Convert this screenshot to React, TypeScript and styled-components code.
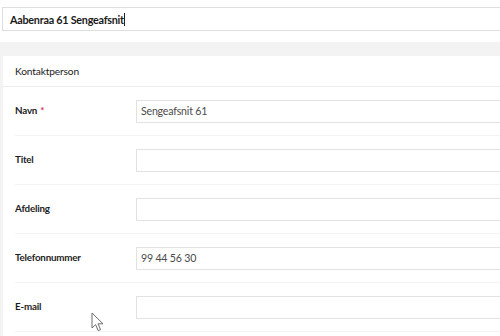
import React from "react";
import styled, { createGlobalStyle } from "styled-components";

const GlobalStyle = createGlobalStyle`
  html, body {
    margin: 0;
    padding: 0;
    background: #fff;
  }
  body {
    font-family: Lato, "Open Sans", "Liberation Sans", sans-serif;
    color: #222;
  }
`;

const fields = [
  { label: "Navn", required: true, value: "Sengeafsnit 61" },
  { label: "Titel", value: "" },
  { label: "Afdeling", value: "" },
  { label: "Telefonnummer", value: "99 44 56 30" },
  { label: "E-mail", value: "" },
];

const App = (): JSX.Element => {
  return (
    <Page>
      <GlobalStyle />
      <TitleBar>
        <TitleInput>
          Aabenraa 61 Sengeafsnit
          <Caret />
        </TitleInput>
      </TitleBar>
      <Body>
        <Card>
          <CardHeader>Kontaktperson</CardHeader>
          {fields.map((f) => (
            <Row key={f.label}>
              <Label>
                {f.label}
                {f.required && <Req>*</Req>}
              </Label>
              <Field>{f.value}</Field>
            </Row>
          ))}
        </Card>
      </Body>
      <Pointer width="14" height="21" viewBox="0 0 14 21">
        <path
          d="M1 1 L1 16 L4.6 12.6 L7.2 18.6 L9.6 17.6 L7 11.8 L12 11.8 Z"
          fill="#fff"
          stroke="#6d6d6d"
          strokeWidth="1"
          strokeLinejoin="round"
        />
      </Pointer>
    </Page>
  );
};

export default App;

const Page = styled.div`
  position: relative;
  width: 500px;
  height: 336px;
  overflow: hidden;
  background: #fff;
`;

const TitleBar = styled.div`
  padding: 7px 0 11px 2px;
`;

const TitleInput = styled.div`
  position: relative;
  width: 640px;
  height: 22px;
  border: 1px solid #dedede;
  padding-left: 7px;
  display: flex;
  align-items: center;
  font-size: 10.8px;
  letter-spacing: -0.25px;
  font-weight: 700;
  color: #1a1a1a;
`;

const Caret = styled.span`
  display: inline-block;
  width: 1px;
  height: 13px;
  margin-left: 0;
  background: #222;
`;

const Body = styled.div`
  background: #f4f3f3;
  padding: 14px 0 0 3px;
  height: 300px;
`;

const Card = styled.div`
  width: 700px;
  background: #fff;
  height: 100%;
`;

const CardHeader = styled.div`
  height: 30px;
  padding-left: 12px;
  display: flex;
  align-items: center;
  border-bottom: 1px solid #ececec;
  font-size: 10.2px;
  letter-spacing: -0.15px;
  color: #222;
`;

const Row = styled.div`
  margin-left: 12px;
  height: 48px;
  display: flex;
  align-items: center;
  border-bottom: 1px solid #f3f3f3;
`;

const Label = styled.div`
  width: 121px;
  margin-top: -3px;
  font-size: 9.8px;
  letter-spacing: -0.2px;
  font-weight: 700;
  color: #1e1e1e;
`;

const Req = styled.span`
  color: #d6336c;
  margin-left: 3px;
`;

const Field = styled.div`
  width: 500px;
  height: 21px;
  border: 1px solid #e2e2e2;
  padding-left: 4px;
  display: flex;
  align-items: center;
  font-size: 10.6px;
  letter-spacing: -0.2px;
  color: #4a4a4a;
`;

const Pointer = styled.svg`
  position: absolute;
  left: 91px;
  top: 312px;
`;
